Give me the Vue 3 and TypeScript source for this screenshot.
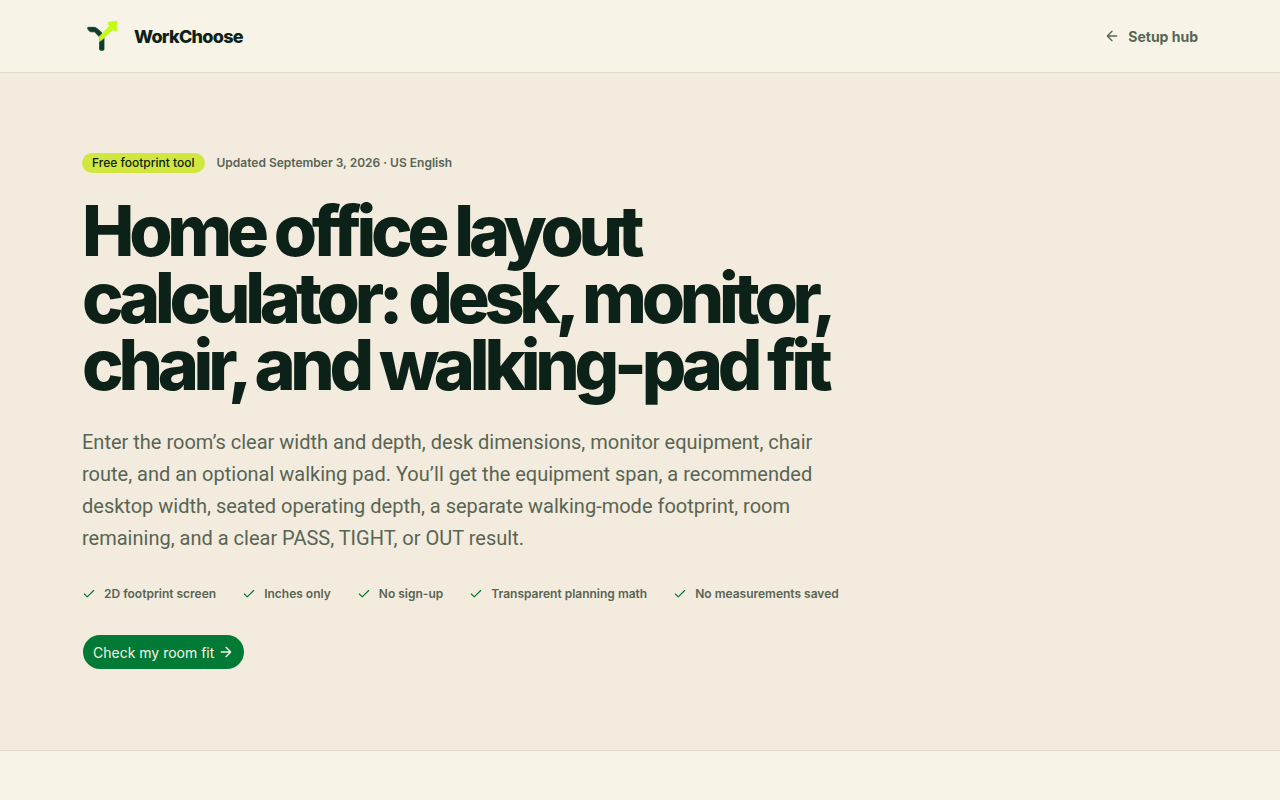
<script setup lang="ts">
const checks: string[] = [
  '2D footprint screen',
  'Inches only',
  'No sign-up',
  'Transparent planning math',
  'No measurements saved',
]
</script>

<template>
  <div class="page">
    <header class="bar">
      <div class="wrap bar-inner">
        <a class="brand" href="#">
          <svg class="logo" viewBox="0 0 40 40" aria-hidden="true">
            <path d="M6.500 11.300H12Q13.500 11.300 15 12.500L19.500 16.500L22 20V33Q22 34.300 21 34.300H18.700Q17.600 34.300 17.600 33V21L12.500 15.800H9Q7.800 15.800 7 14.600L5.600 12.600Q5.200 11.300 6.500 11.300Z" fill="#0b3d2a" stroke="#0b3d2a" stroke-width=".8" stroke-linejoin="round" />
            <path d="M17.600 25.500V20.200L27.600 10L26.200 8.200V6.300L35 5.300L34.300 14.800L32.400 15L31 13.300L21.800 22.200Z" fill="#c4fb12" stroke="#c4fb12" stroke-width=".8" stroke-linejoin="round" />
          </svg>
          <span>WorkChoose</span>
        </a>
        <a class="back" href="#">
          <svg viewBox="0 0 24 24" class="icon" aria-hidden="true"><path d="m12 19-7-7 7-7M19 12H5" /></svg>
          Setup hub
        </a>
      </div>
    </header>
    <main>
      <section class="hero">
        <div class="wrap">
          <div class="copy">
            <div class="meta">
              <span class="badge">Free footprint tool</span>
              <span class="updated">Updated September 3, 2026 · US English</span>
            </div>
            <h1>Home office layout calculator: desk, monitor, chair, and walking-pad fit</h1>
            <p class="lead">Enter the room’s clear width and depth, desk dimensions, monitor equipment, chair route, and an optional walking pad. You’ll get the equipment span, a recommended desktop width, seated operating depth, a separate walking-mode footprint, room remaining, and a clear PASS, TIGHT, or OUT result.</p>
            <ul class="checks">
              <li v-for="item in checks" :key="item">
                <svg viewBox="0 0 24 24" class="icon tick" aria-hidden="true"><path d="M20 6 9 17l-5-5" /></svg>
                {{ item }}
              </li>
            </ul>
            <a class="cta" href="#">
              Check my room fit
              <svg viewBox="0 0 24 24" class="icon" aria-hidden="true"><path d="M5 12h14M12 5l7 7-7 7" /></svg>
            </a>
          </div>
        </div>
      </section>
    </main>
  </div>
</template>

<style>
body {
  background: #f7f3e6;
}
</style>

<style scoped>
.page {
  font-family: Inter, "Liberation Sans", sans-serif;
  color: #0c2218;
  background: #f7f3e6;
}
.page * {
  box-sizing: border-box;
}
a {
  color: inherit;
  text-decoration: none;
}
.wrap {
  max-width: 1180px;
  margin: 0 auto;
  padding: 0 32px;
}
.bar {
  border-bottom: 1px solid #e0dacb;
}
.bar-inner {
  display: flex;
  align-items: center;
  justify-content: space-between;
  height: 72px;
}
.brand {
  display: flex;
  align-items: center;
  gap: 12px;
  font-size: 18px;
  font-weight: 800;
  letter-spacing: -0.04em;
}
.logo {
  width: 40px;
  height: 40px;
}
.back {
  display: flex;
  align-items: center;
  gap: 8px;
  font-size: 14px;
  font-weight: 700;
  color: #586554;
}
.icon {
  width: 16px;
  height: 16px;
  fill: none;
  stroke: currentColor;
  stroke-width: 2;
  stroke-linecap: round;
  stroke-linejoin: round;
}
.hero {
  padding: 80px 0;
  background: #f3ebdd;
  border-bottom: 1px solid #e0dacb;
}
.copy {
  max-width: 768px;
}
.meta {
  display: flex;
  align-items: center;
  gap: 12px;
  font-size: 12px;
  line-height: 20px;
}
.badge {
  padding: 0 10px;
  border-radius: 10px;
  background: #d1e73f;
  font-weight: 500;
}
.updated {
  font-weight: 600;
  color: #586554;
}
h1 {
  margin: 24px 0 0;
  font-size: 70px;
  line-height: 67px;
  font-weight: 800;
  letter-spacing: -0.075em;
}
.lead {
  margin: 28px 0 0;
  font-family: Roboto, Inter, sans-serif;
  font-size: 20px;
  line-height: 32px;
  color: #586554;
}
.checks {
  display: flex;
  flex-wrap: wrap;
  gap: 12px 26px;
  margin: 32px 0 0;
  padding: 0;
  list-style: none;
  font-size: 12px;
  line-height: 16px;
  font-weight: 600;
  color: #586554;
}
.checks li {
  display: flex;
  align-items: center;
  gap: 8px;
  white-space: nowrap;
}
.tick {
  width: 14px;
  height: 14px;
  color: #007a35;
}
.cta {
  display: inline-flex;
  align-items: center;
  gap: 4px;
  margin-top: 32px;
  height: 36px;
  padding: 0 10px;
  border: 1px solid transparent;
  border-radius: 18px;
  background: #007a35;
  background-clip: padding-box;
  color: #f7f3e6;
  font-size: 14px;
  font-weight: 400;
}
</style>
